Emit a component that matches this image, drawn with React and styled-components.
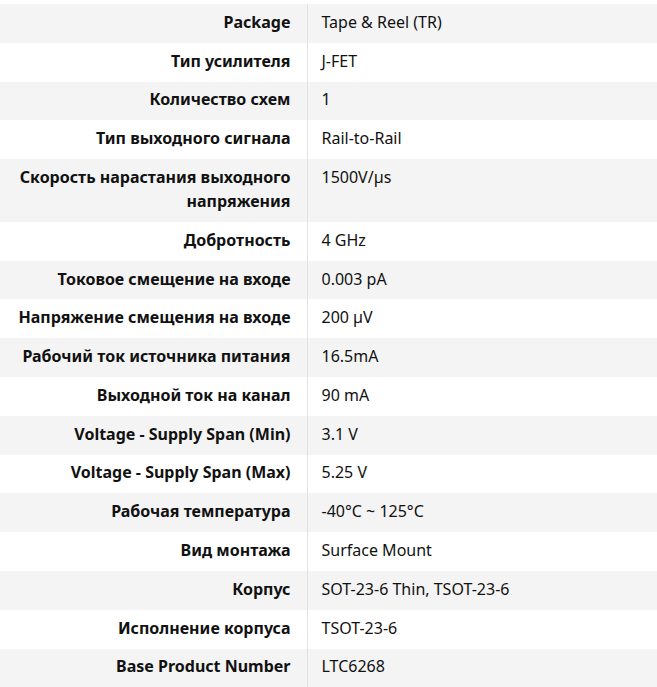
import React from "react";
import styled, { createGlobalStyle } from "styled-components";

const GlobalStyle = createGlobalStyle`
  html, body {
    margin: 0;
    padding: 0;
    background: #fff;
  }
  body {
    font-family: "Noto Sans", "Open Sans", sans-serif;
    color: #111;
  }
`;

const Wrap = styled.div`
  padding-top: 4px;
`;

const Table = styled.table`
  width: 100%;
  border-collapse: collapse;
  font-size: 16px;
  line-height: 24px;
`;

const Row = styled.tr`
  background: ${(p) => (p.$odd ? "#f4f4f4" : "#fff")};
`;

const Label = styled.th`
  width: 307px;
  box-sizing: border-box;
  padding: 5.9px 16px 8.9px 8px;
  text-align: right;
  vertical-align: top;
  font-weight: 700;
  border-right: 1px solid #e2e2e2;
`;

const Value = styled.td`
  padding: 5.9px 8px 8.9px 14px;
  text-align: left;
  vertical-align: top;
  font-weight: 400;
`;

const specs = [
  ["Package", "Tape & Reel (TR)"],
  ["Тип усилителя", "J-FET"],
  ["Количество схем", "1"],
  ["Тип выходного сигнала", "Rail-to-Rail"],
  ["Скорость нарастания выходного напряжения", "1500V/µs"],
  ["Добротность", "4 GHz"],
  ["Токовое смещение на входе", "0.003 pA"],
  ["Напряжение смещения на входе", "200 µV"],
  ["Рабочий ток источника питания", "16.5mA"],
  ["Выходной ток на канал", "90 mA"],
  ["Voltage - Supply Span (Min)", "3.1 V"],
  ["Voltage - Supply Span (Max)", "5.25 V"],
  ["Рабочая температура", "-40°C ~ 125°C"],
  ["Вид монтажа", "Surface Mount"],
  ["Корпус", "SOT-23-6 Thin, TSOT-23-6"],
  ["Исполнение корпуса", "TSOT-23-6"],
  ["Base Product Number", "LTC6268"],
];

export default function App() {
  return (
    <Wrap>
      <GlobalStyle />
      <Table>
        <tbody>
          {specs.map(([k, v], i) => (
            <Row key={k} $odd={i % 2 === 0}>
              <Label>{k}</Label>
              <Value>{v}</Value>
            </Row>
          ))}
        </tbody>
      </Table>
    </Wrap>
  );
}
